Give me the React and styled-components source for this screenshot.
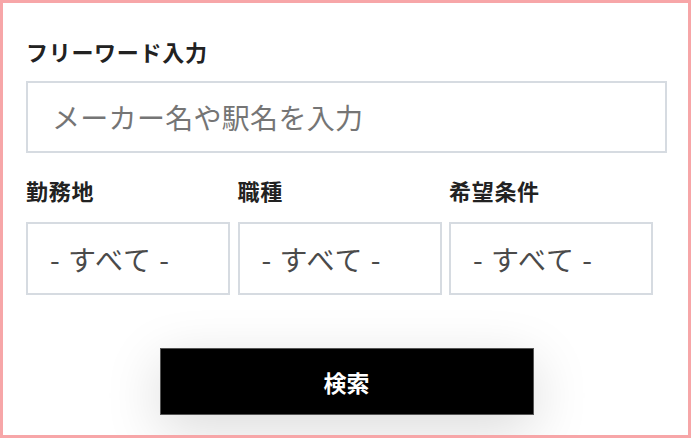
import React from 'react';
import styled, { createGlobalStyle } from 'styled-components';

const GlobalStyle = createGlobalStyle`
  html, body {
    margin: 0;
    padding: 0;
    background: #fff;
  }
  body {
    font-family: "Noto Sans CJK JP", "Noto Sans", sans-serif;
  }
  * {
    box-sizing: border-box;
  }
`;

const Frame = styled.div`
  width: 691px;
  height: 438px;
  border: 3px solid #f7a6a8;
  background: #fff;
  padding: 33px 21px 0 23px;
  overflow: hidden;
`;

const Label = styled.div`
  height: 30px;
  line-height: 30px;
  font-size: 22px;
  letter-spacing: 0.7px;
  font-weight: 700;
  color: #222;
  margin-bottom: ${props => props.gap}px;
`;

const TextInput = styled.input`
  display: block;
  width: 641px;
  height: 72px;
  border: 2px solid #d6dbe1;
  padding: 0 0 0 24px;
  font-family: inherit;
  font-size: 28px;
  letter-spacing: 0.3px;
  color: #333;
  outline: none;
  margin-bottom: 22px;

  ::placeholder {
    color: #8a8a8a;
  }
`;

const Fields = styled.div`
  display: grid;
  grid-template-columns: repeat(3, 204px);
  column-gap: 7.5px;
`;

const Field = styled.div`
  display: flex;
  flex-direction: column;
`;

const SelectBox = styled.div`
  height: 73px;
  border: 2px solid #d6dbe1;
  display: flex;
  align-items: center;
  padding-left: 22px;
  font-size: 28px;
  letter-spacing: 1px;
  color: #4a4a4a;
  white-space: pre;
`;

const ButtonRow = styled.div`
  display: flex;
  justify-content: center;
  padding-top: 53px;
`;

const SearchButton = styled.button`
  width: 374px;
  height: 67px;
  background: #000;
  border: 1px solid #555;
  color: #fff;
  font-family: inherit;
  font-size: 23px;
  font-weight: 700;
  box-shadow: 0 14px 55px rgba(0, 0, 0, 0.15);
  cursor: pointer;
`;

const FIELDS = ['勤務地', '職種', '希望条件'];

const App = () => (
  <>
    <GlobalStyle />
    <Frame>
      <Label gap={15}>フリーワード入力</Label>
      <TextInput placeholder="メーカー名や駅名を入力" />
      <Fields>
        {FIELDS.map(name => (
          <Field key={name}>
            <Label gap={17}>{name}</Label>
            <SelectBox>- すべて -</SelectBox>
          </Field>
        ))}
      </Fields>
      <ButtonRow>
        <SearchButton>検索</SearchButton>
      </ButtonRow>
    </Frame>
  </>
);

export default App;
